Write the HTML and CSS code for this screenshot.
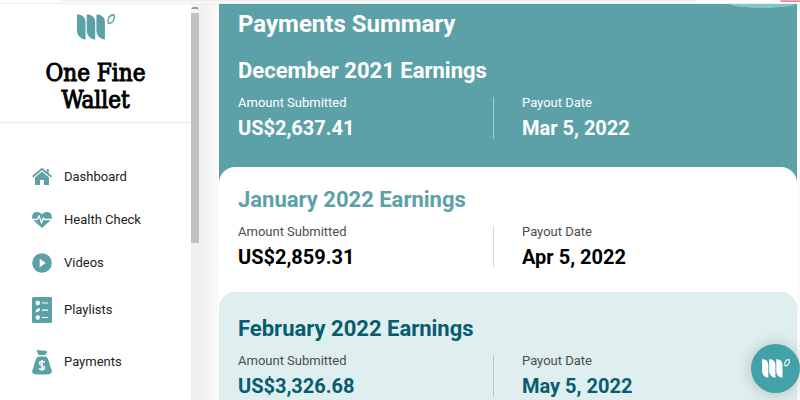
FILE: index.html
```html
<!DOCTYPE html>
<html lang="en">
<head>
<meta charset="utf-8">
<title>One Fine Wallet – Payments</title>
<link rel="stylesheet" href="styles.css">
</head>
<body>
<svg class="defs" aria-hidden="true">
  <symbol id="logo" viewBox="0 0 38 26">
    <path d="M0 .5C5 .5 8.500 3 8.500 8V25.500C3 25 0 21 0 16ZM9.700 .5C14.700 .5 18.200 3 18.200 8V25.500C12.700 25 9.700 21 9.700 16ZM19.400 .5C24.400 .5 27.900 3 27.900 8V25.500C22.400 25 19.400 21 19.400 16Z" fill="currentColor"/>
    <path d="M37 .8C38 5 36 9.500 31.500 9.500C30 5 32 1 37 .8Z" fill="none" stroke="currentColor" stroke-width="1.400"/>
  </symbol>
</svg>
<div class="topbar"><span class="address"></span><span class="update"></span></div>
<div class="app">
  <aside class="sidebar">
    <header class="brand">
      <svg class="brand-logo"><use href="#logo"/></svg>
      <h1>One Fine<br>Wallet</h1>
    </header>
    <nav>
      <a href="#dashboard"><svg viewBox="0 0 20 20"><path d="M10 4.500L3 10.500V18H8V13H12V18H17V10.500Z"/><path d="M.6 10L10 2.200L19.400 10M15.800 2V6.500" fill="none" stroke="#fff" stroke-width="3"/><path d="M.6 9.800L10 2L19.400 9.800M15.800 2V6.500" fill="none" stroke="currentColor" stroke-width="1.800"/></svg>Dashboard</a>
      <a href="#health"><svg viewBox="0 0 20 20"><path d="M10 18L.5 9.500C-.5 6 .5 2 5 2C7.500 2 9 3 10 4.500C11 3 12.500 2 15 2C19.500 2 20.500 6 19.500 9.500Z"/><path d="M0 9.500H5L7 6L9.500 12.500L11.500 8L12.500 9.500H20" fill="none" stroke="#fff" stroke-width="1.300"/></svg>Health Check</a>
      <a href="#videos"><svg viewBox="0 0 20 20"><circle cx="10" cy="10" r="9.800"/><path d="M7.700 5.800L13.700 10L7.700 14.200Z" fill="#fff"/></svg>Videos</a>
      <a class="tall" href="#playlists"><svg viewBox="0 0 20 26"><rect width="20" height="26" rx="1.500"/><g fill="#fff"><circle cx="5.800" cy="6" r="2.200"/><path d="M3.800 15.300C3.500 12.500 5.500 11.300 8 11.300C8 14 6.500 15.600 3.800 15.300Z"/><circle cx="5.800" cy="20.500" r="2.200"/></g><path d="M10 6H16M10 13.200H16M10 20.500H16" stroke="#fff" stroke-width="1.200"/></svg>Playlists</a>
      <a class="tall" href="#payments"><svg viewBox="0 0 20 26"><path d="M6.500 6L4.500 1.500C6 .5 7 2 8 .8C9 2 10 2 10.500 1C11.500 3 12 1.500 13 .8C13 2.500 14 2.500 15.500 2.300C15 4 14 5 13 6ZM6.500 7.500H13.500C17.500 9 17.500 17 19.500 21C21 24 18 25.500 15 25.500H5C2 25.500-1 24 .5 21C2.500 17 2.500 9 6.500 7.500Z"/><path d="M12.700 13.500C12 12.300 7.500 12 7.500 14.500C7.500 17 12.600 16 12.600 18.500C12.600 21 8 20.800 7.200 19.300M10 11V22" fill="none" stroke="#fff" stroke-width="1.500"/></svg>Payments</a>
    </nav>
  </aside>
  <div class="scrollbar"><span class="arrow"></span><span class="thumb"></span></div>
  <main>
    <section class="card december">
      <h2>Payments Summary</h2>
      <h3>December 2021 Earnings</h3>
      <dl><div><dt>Amount Submitted</dt><dd>US$2,637.41</dd></div><div><dt>Payout Date</dt><dd>Mar 5, 2022</dd></div></dl>
    </section>
    <section class="card january">
      <h3>January 2022 Earnings</h3>
      <dl><div><dt>Amount Submitted</dt><dd>US$2,859.31</dd></div><div><dt>Payout Date</dt><dd>Apr 5, 2022</dd></div></dl>
    </section>
    <section class="card february">
      <h3>February 2022 Earnings</h3>
      <dl><div><dt>Amount Submitted</dt><dd>US$3,326.68</dd></div><div><dt>Payout Date</dt><dd>May 5, 2022</dd></div></dl>
    </section>
  </main>
</div>
<button class="help" aria-label="Open help"><svg><use href="#logo"/></svg></button>
</body>
</html>
```
FILE: styles.css
```css
* { box-sizing: border-box; }
body {
  margin: 0;
  height: 100vh;
  display: flex;
  flex-direction: column;
  overflow: hidden;
  background: #fff;
  color: #222;
  font: 13px/20px Roboto, sans-serif;
}
h1, h2, h3, dl, dd { margin: 0; }
.defs { position: absolute; width: 0; height: 0; }

.topbar {
  flex: none;
  display: flex;
  justify-content: space-between;
  height: 4px;
  padding-left: 62px;
  border-bottom: 1px solid #eee;
}
.address { width: 86%; max-width: 100%; height: 2px; background: #eff0f2; border-radius: 0 0 4px 4px; }
.update { width: 20px; height: 2px; background: #eeb0ae; border-bottom: 1px solid #e08482; border-radius: 0 0 0 4px; }

.app { flex: 1; min-height: 0; display: flex; }
.sidebar { flex: none; width: 191px; overflow: hidden; background: #fff; }
.brand {
  display: flex;
  flex-direction: column;
  align-items: center;
  gap: 20px;
  padding: 10px 0 8px;
  border-bottom: 1px solid #eaeaea;
}
.brand-logo { width: 38px; height: 26px; color: #5ca1a8; }
h1 {
  color: #000;
  font: 24px/27px "Roboto Slab", "DejaVu Serif Condensed", "DejaVu Serif", serif;
  -webkit-text-stroke: 1px #000;
  text-align: center;
}
nav { display: flex; flex-direction: column; padding: 32px 32px 0; }
nav a {
  display: flex;
  align-items: center;
  gap: 12px;
  height: 43px;
  color: #222;
  text-decoration: none;
}
nav a.tall { height: 52px; }
nav svg { width: 20px; height: 20px; fill: currentColor; color: #5ca1a8; }
nav .tall svg { height: 26px; }

.scrollbar { flex: none; width: 8px; background: #f0f0f0; }
.arrow { display: block; height: 9px; background: #f4f4f4; }
.arrow::before {
  content: "";
  display: block;
  width: 4px;
  margin: 0 auto;
  padding-top: 3px;
  border: 2px solid transparent;
  border-top: 0;
  border-bottom-color: #999;
}
.thumb { display: block; height: 58%; background: #c1c1c1; }

main {
  flex: 1;
  min-width: 0;
  overflow: hidden;
  padding: 0 3px 0 20px;
  background: linear-gradient(90deg, #efefef, #fafafa 20px);
}
.card { padding: 20px 19px 24px; }
.card + .card { border-radius: 16px 16px 0 0; }
.december {
  padding: 5px 19px 44px;
  background: radial-gradient(ellipse 34px 4px at 94% 0, #83c5c9 90%, #5ca1a8);
  color: #fff;
}
.january { margin-top: -16px; background: #fff; box-shadow: 0 16px #fff; }
.february { position: relative; padding-top: 24px; background: #dfeeee; }
h2 { font-size: 24px; line-height: 30px; font-weight: 700; margin-bottom: 19px; }
h3 { font-size: 22px; line-height: 26px; font-weight: 700; margin-bottom: 13px; }
.january h3 { color: #5ca1a8; }
.february h3, .february dd { color: #075c70; }
dl { display: grid; grid-template-columns: 1fr 1fr; gap: 28px; }
dl div { display: flex; flex-direction: column; gap: 8px; }
dl div:first-child { border-right: 1px solid #a9cdd0; }
.january dl div { border-color: #c6e0e1; }
dt { color: #4d4d4d; line-height: 12px; }
.december dt { color: #fff; }
dd { color: #000; font-size: 20px; line-height: 22px; font-weight: 700; }
.december dd { color: #fff; }

.help {
  position: fixed;
  right: 0;
  bottom: 7px;
  display: grid;
  place-items: center;
  width: 49px;
  height: 49px;
  padding: 0;
  border: 0;
  border-radius: 50%;
  background: #42a2a8;
  color: #fff;
  box-shadow: 0 1px 16px #0003;
}
.help svg { width: 28px; height: 19px; }
```
